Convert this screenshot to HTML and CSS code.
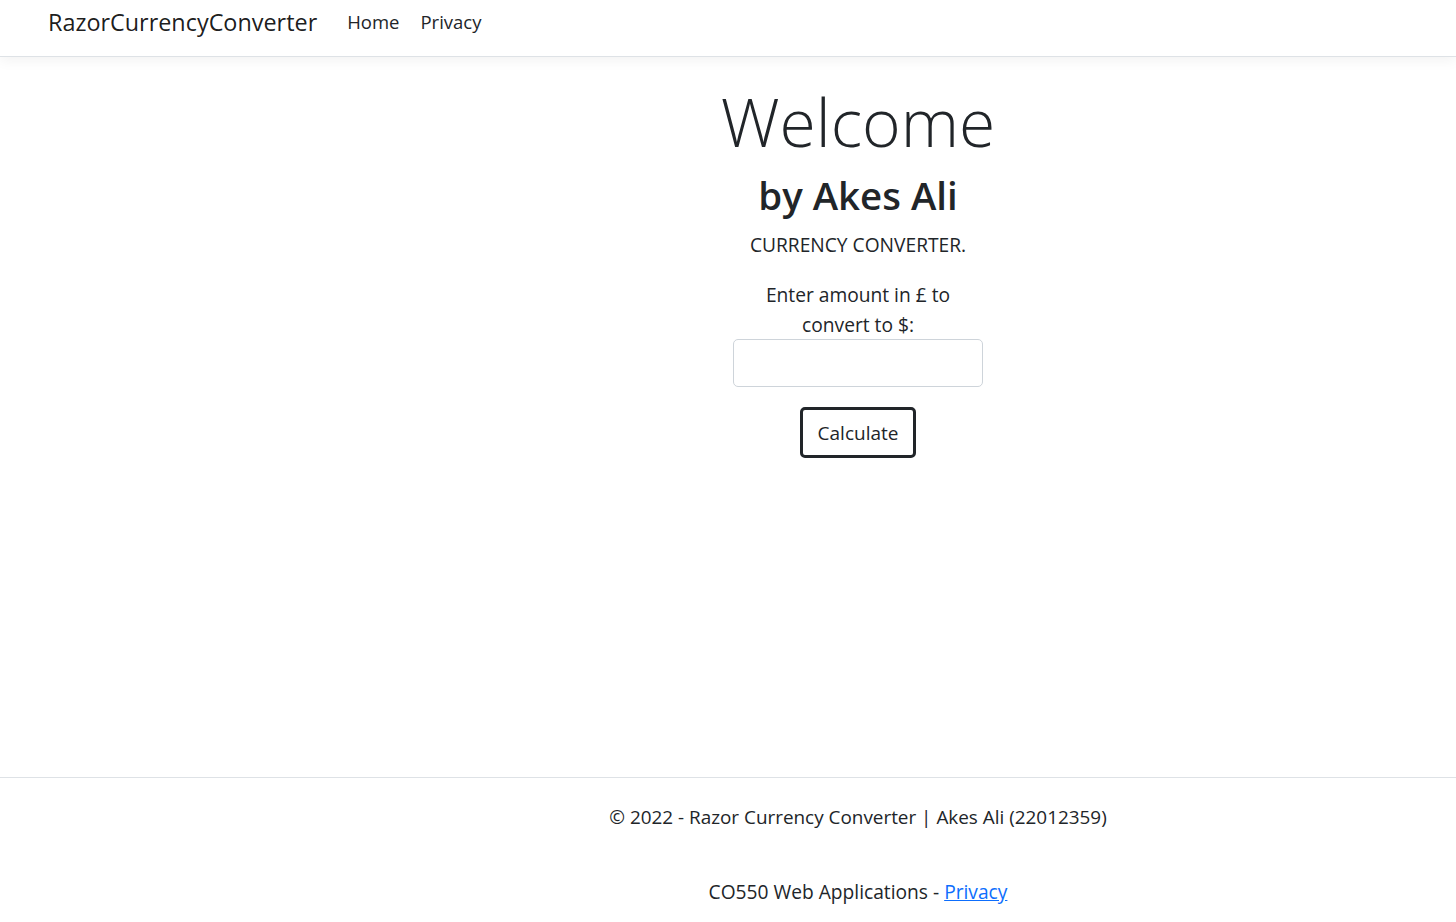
FILE: index.html
```html
<!DOCTYPE html>
<html lang="en">
<head>
<meta charset="utf-8">
<title>RazorCurrencyConverter</title>
<link rel="stylesheet" href="styles.css">
</head>
<body>
<header class="navbar">
  <a class="brand" href="#">RazorCurrencyConverter</a>
  <nav class="nav">
    <a class="nav-link" href="#">Home</a>
    <a class="nav-link" href="#">Privacy</a>
  </nav>
</header>
<main class="main">
  <div class="center-col">
    <h1 class="display">Welcome</h1>
    <h2 class="byline">by Akes Ali</h2>
    <p class="caps">CURRENCY CONVERTER.</p>
    <form class="form">
      <label class="label" for="amt">Enter amount in £ to convert to $:</label>
      <input class="input" id="amt" type="text">
      <button class="btn" type="button">Calculate</button>
    </form>
  </div>
</main>
<footer class="footer">
  <div class="center-col">
    <p class="foot-line">© 2022 - Razor Currency Converter | Akes Ali (22012359)</p>
    <p class="foot-line second">CO550 Web Applications - <a class="link" href="#">Privacy</a></p>
  </div>
</footer>
</body>
</html>
```

FILE: styles.css
```css
* { box-sizing: border-box; }
html, body { height: 100%; }
body {
  margin: 0;
  font-family: "Open Sans", "Noto Sans", sans-serif;
  font-size: 19.2px;
  color: #212529;
  background: #fff;
  display: flex;
  flex-direction: column;
}
.navbar {
  height: 57px;
  flex: none;
  display: flex;
  align-items: flex-start;
  padding: 4px 0 0 48px;
  border-bottom: 1px solid #dee2e6;
  box-shadow: 0 4px 12px rgba(0,0,0,.05);
  position: relative;
  z-index: 1;
}
.brand {
  font-size: 23.4px;
  line-height: 36px;
  color: rgba(0,0,0,.9);
  text-decoration: none;
  margin-right: 30px;
}
.nav { display: flex; gap: 21px; }
.nav-link {
  font-size: 18.5px;
  line-height: 36px;
  color: #212529;
  text-decoration: none;
}
.main { flex: 1; }
.center-col {
  margin-left: 260px;
  text-align: center;
}
.display {
  font-size: 66px;
  font-weight: 300;
  line-height: 80px;
  margin: 24px 0 0;
}
.byline {
  font-size: 38.4px;
  font-weight: 600;
  line-height: 46px;
  margin: 11px 0 0;
}
.caps { margin: 13px 0 0; line-height: 28.8px; }
.form {
  display: flex;
  flex-direction: column;
  align-items: center;
  margin-top: 20px;
}
.label {
  width: 200px;
  line-height: 30px;
}
.input {
  width: 250px;
  height: 48px;
  border: 1px solid #ced4da;
  border-radius: 5px;
  font: inherit;
  margin-top: -1px;
}
.btn {
  margin-top: 20px;
  width: 116px;
  height: 51px;
  padding: 2px 0 0;
  border: 3px solid #212529;
  border-radius: 5px;
  background: #fff;
  font: inherit;
  font-size: 19px;
  color: #212529;
}
.footer {
  height: 145px;
  flex: none;
  border-top: 1px solid #dee2e6;
}
.foot-line { margin: 25px 0 0; font-size: 18.9px; line-height: 28.8px; }
.foot-line.second { margin-top: 46px; font-size: 19.2px; }
.link { color: #0d6efd; }
```
